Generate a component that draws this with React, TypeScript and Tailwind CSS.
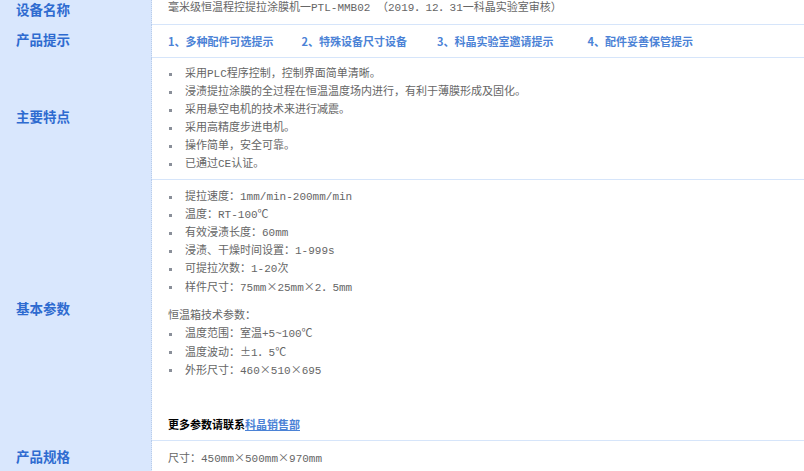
import React from 'react';

const features = [
  '采用PLC程序控制，控制界面简单清晰。',
  '浸渍提拉涂膜的全过程在恒温温度场内进行，有利于薄膜形成及固化。',
  '采用悬空电机的技术来进行减震。',
  '采用高精度步进电机。',
  '操作简单，安全可靠。',
  '已通过CE认证。',
];

const params = [
  '提拉速度：1mm/min-200mm/min',
  '温度：RT-100℃',
  '有效浸渍长度：60mm',
  '浸渍、干燥时间设置：1-999s',
  '可提拉次数：1-20次',
  '样件尺寸：75mm×25mm×2．5mm',
];

const ovenParams = ['温度范围：室温+5~100℃', '温度波动：±1．5℃', '外形尺寸：460×510×695'];

const tips = [
  { text: '1、多种配件可选提示', gap: 'mr-[28px]' },
  { text: '2、特殊设备尺寸设备', gap: 'mr-[30px]' },
  { text: '3、科晶实验室邀请提示', gap: 'mr-[34px]' },
  { text: '4、配件妥善保管提示', gap: '' },
];

const cjk = { fontFamily: '"Noto Sans CJK SC", sans-serif' };

// × and ± are full width in the reference, so render them with the CJK font
function Txt({ s }: { s: string }) {
  const parts = s.split(/([×±])/);
  return (
    <>
      {parts.map((p, i) =>
        p === '×' || p === '±' ? (
          <span key={i} style={cjk} className="inline-block w-[11px] text-center">
            {p}
          </span>
        ) : (
          <React.Fragment key={i}>{p}</React.Fragment>
        )
      )}
    </>
  );
}

function Bullets({ items }: { items: string[] }) {
  return (
    <ul>
      {items.map((t) => (
        <li key={t} className="flex items-center h-[18px]">
          <span className="w-[3px] h-[3px] bg-[#8a8f99] ml-[1px] mr-[13px] shrink-0" />
          <span>
            <Txt s={t} />
          </span>
        </li>
      ))}
    </ul>
  );
}

function Row({ label, children, className }: { label: string; children: React.ReactNode; className?: string }) {
  return (
    <div className="flex">
      <div className="w-[152px] shrink-0 bg-[#d9e7fd] border-r border-dotted border-r-[#b9cdea] flex items-center pl-4">
        <span className="text-[13.5px] font-bold text-[#2e6bd0]">{label}</span>
      </div>
      <div className={`flex-1 pl-4 border-b border-[#d6e5fa] ${className ?? ''}`}>{children}</div>
    </div>
  );
}

export default function App() {
  return (
    <div
      className="w-[804px] h-[471px] overflow-hidden bg-white text-[11px] text-[#666] leading-[18px]"
      style={{ fontFamily: '"Liberation Mono", "Noto Sans CJK SC", monospace' }}
    >
      <div className="-mt-[1px]">
        <Row label="设备名称" className="h-[26px] pt-0">
          <div className="leading-[18px]">毫米级恒温程控提拉涂膜机一PTL-MMB02 （2019．12．31一科晶实验室审核）</div>
        </Row>
      </div>
      <Row label="产品提示" className="h-[33px] flex items-center">
        <div className="flex font-bold text-[#4b82d6]" style={cjk}>
          {tips.map((t) => (
            <span key={t.text} className={t.gap}>
              {t.text}
            </span>
          ))}
        </div>
      </Row>
      <Row label="主要特点" className="pt-[7px] pb-[6px]">
        <Bullets items={features} />
      </Row>
      <Row label="基本参数" className="pt-[8px] pb-[7px]">
        <Bullets items={params} />
        <p className="mt-[11px]">恒温箱技术参数：</p>
        <Bullets items={ovenParams} />
        <div className="h-[36px]" />
        <p className="font-bold text-black" style={cjk}>
          更多参数请联系<span className="text-[#4b82d6] underline">科晶销售部</span>
        </p>
      </Row>
      <Row label="产品规格" className="pt-[7px] pb-[7px]">
        <div>
          <Txt s="尺寸：450mm×500mm×970mm" />
        </div>
      </Row>
    </div>
  );
}
